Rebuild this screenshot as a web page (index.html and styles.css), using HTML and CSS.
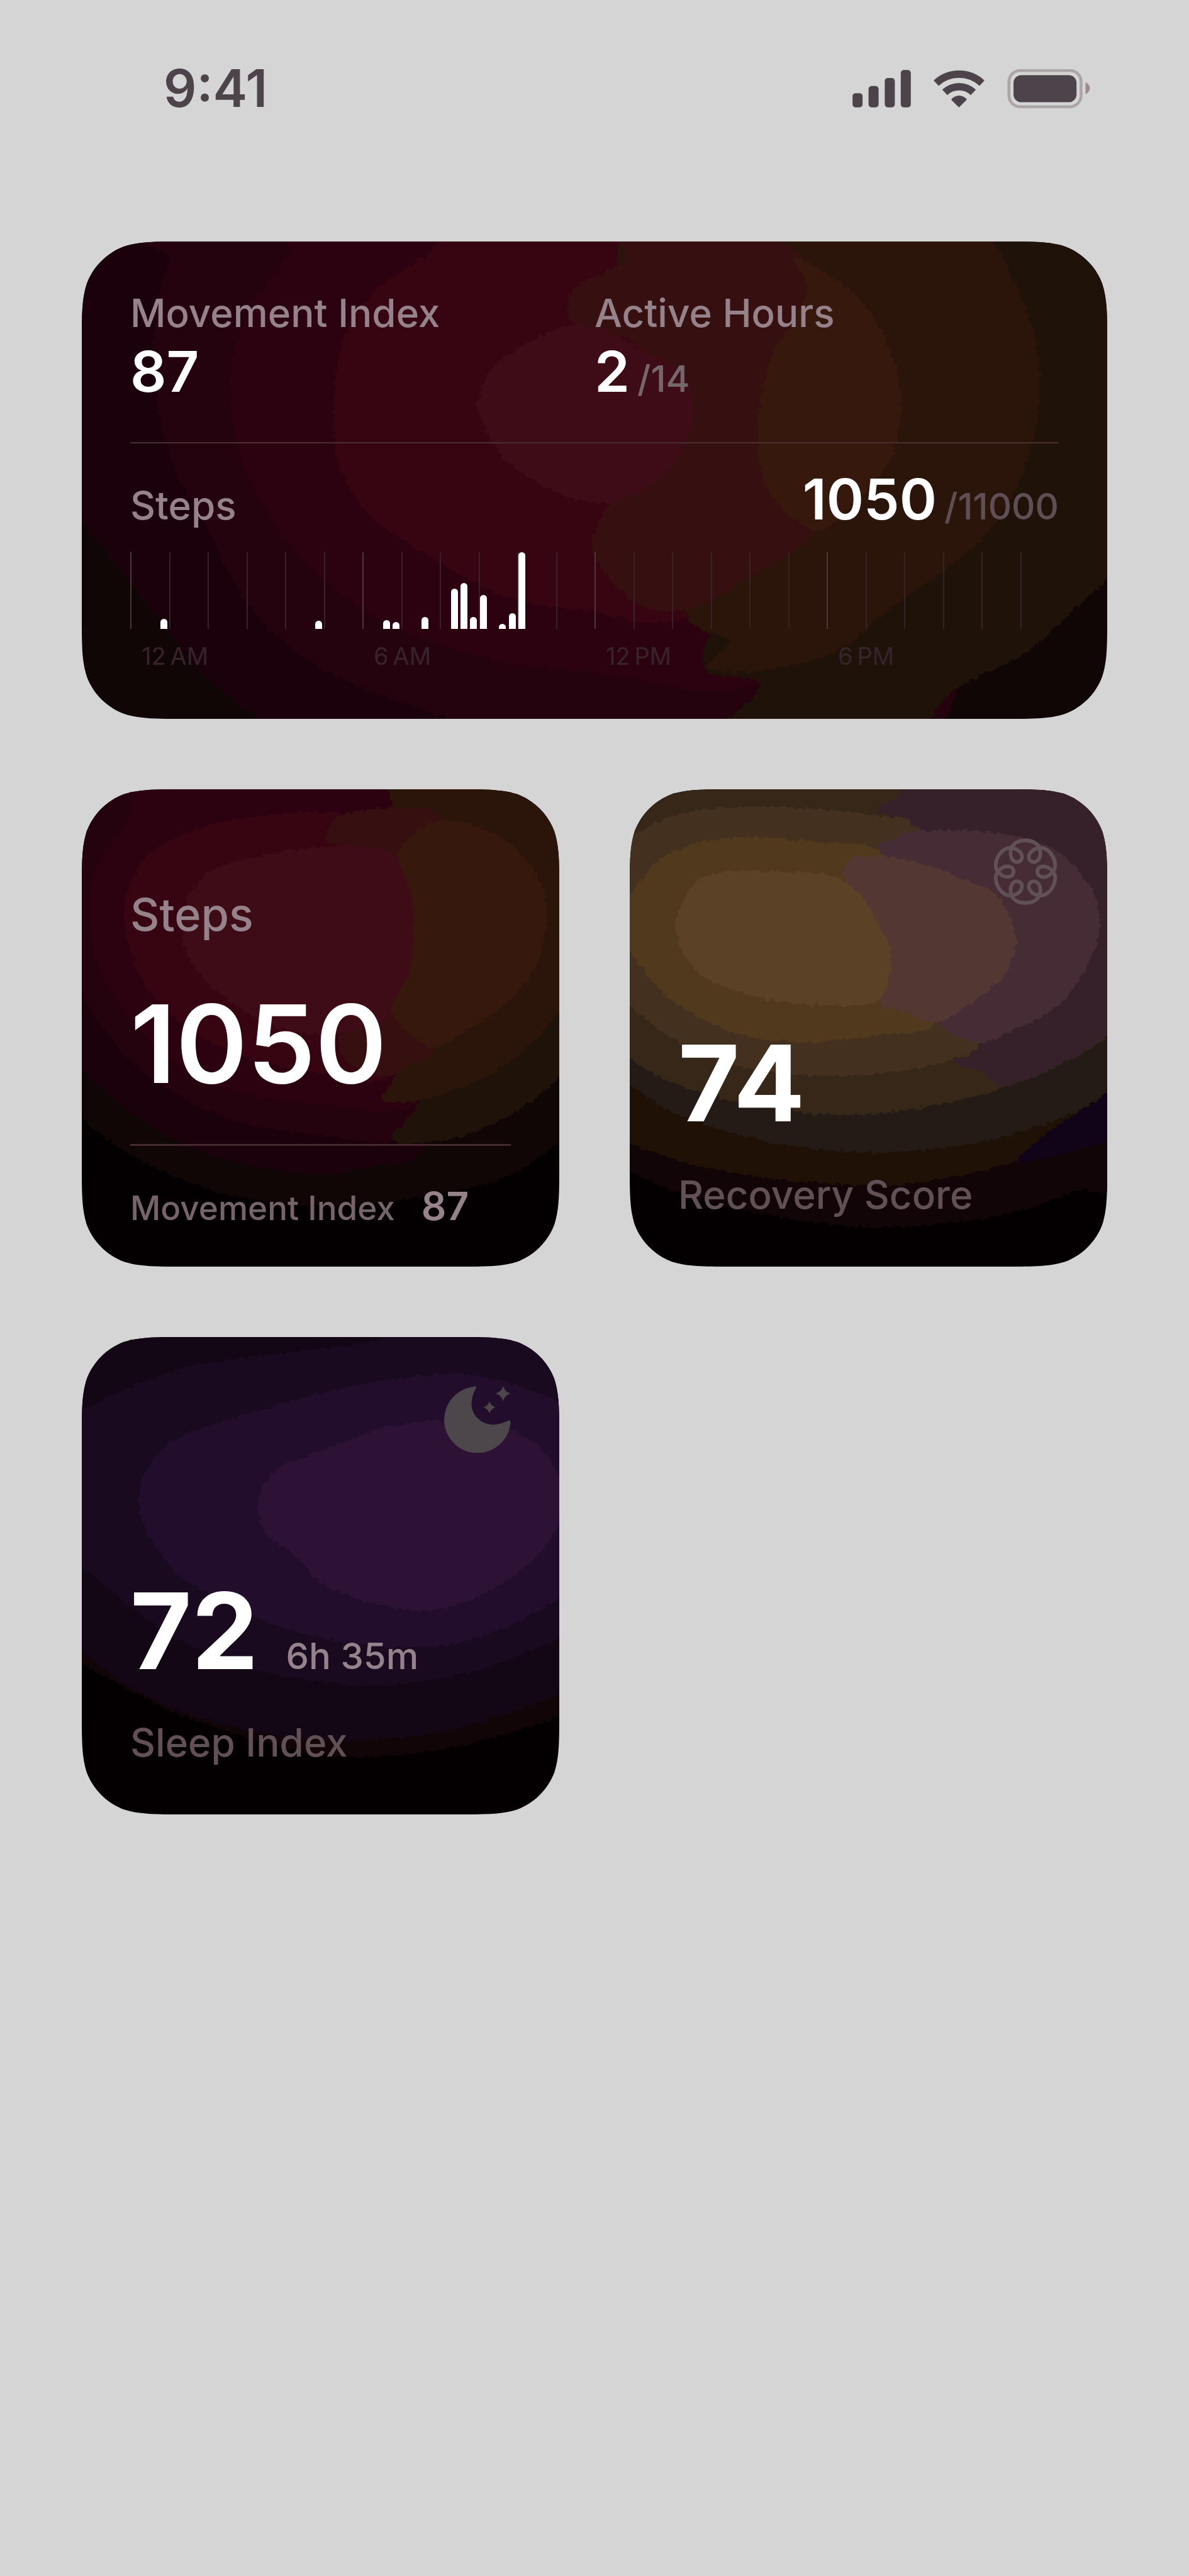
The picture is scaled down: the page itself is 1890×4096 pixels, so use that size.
FILE: index.html
```html
<!DOCTYPE html>
<html lang="en">
<head>
  <meta charset="UTF-8">
  <meta name="viewport" content="width=device-width, initial-scale=1.0">
  <title>Widgets</title>
  <link rel="stylesheet" href="styles.css">
</head>
<body>

<header class="status-bar">
  <time class="clock">9:41</time>
  <div class="status-icons">
    <svg class="icon-signal" viewBox="83 62 284 190" aria-label="Signal">
      <rect x="83" y="179" width="49" height="69" rx="15"/>
      <rect x="161" y="144" width="49" height="104" rx="15"/>
      <rect x="240" y="105" width="49" height="143" rx="15"/>
      <rect x="318" y="66" width="49" height="182" rx="15"/>
    </svg>
    <svg class="icon-wifi" viewBox="475 62 247 190" aria-label="Wi-Fi">
      <path class="arc" d="M487,130 A164,164 0 0 1 710,130"/>
      <path class="arc" d="M529,175 A101,101 0 0 1 668,175"/>
      <path d="M598,248 L562,213 Q560,208 564,205 Q598,177 633,205 Q637,208 634,213 Z"/>
    </svg>
    <svg class="icon-battery" viewBox="831 62 401 190" aria-label="Battery">
      <rect class="shell" x="838" y="69" width="351" height="176" rx="54"/>
      <rect x="860" y="91" width="307" height="132" rx="38"/>
      <path class="nub" d="M1211,125 Q1232,138 1232,155 Q1232,172 1211,185 Z"/>
    </svg>
  </div>
</header>

<main class="widgets">

  <!-- wide movement widget -->
  <section class="card card-wide">
    <svg class="backdrop" data-bands="movement" viewBox="0 0 1630 759" preserveAspectRatio="none" aria-hidden="true">
      <defs>
        <clipPath id="shapeWide">
          <path d="M162,0 H1468 C1515,0 1538,0 1563,8 C1590,18 1612,40 1622,67 C1630,92 1630,115 1630,162 V597 C1630,644 1630,667 1622,692 C1612,719 1590,741 1563,751 C1538,759 1515,759 1468,759 H162 C115,759 92,759 67,751 C40,741 18,719 8,692 C0,667 0,644 0,597 V162 C0,115 0,92 8,67 C18,40 40,18 67,8 C92,0 115,0 162,0 Z"/>
        </clipPath>
        <filter id="roughWide" x="0" y="0" width="100%" height="100%" color-interpolation-filters="sRGB">
          <feTurbulence type="fractalNoise" baseFrequency="0.12" numOctaves="3" seed="4"/>
          <feDisplacementMap in="SourceGraphic" scale="13" xChannelSelector="R" yChannelSelector="G"/>
        </filter>
      </defs>
      <g clip-path="url(#shapeWide)">
        <rect width="1630" height="759" fill="#110606"/>
        <g filter="url(#roughWide)"><g class="bands" transform="scale(1.0395 0.484)"></g></g>
      </g>
    </svg>

    <div class="card-body">
      <div class="metrics">
        <div class="metric">
          <h2 class="label">Movement Index</h2>
          <p class="value">87</p>
        </div>
        <div class="metric">
          <h2 class="label">Active Hours</h2>
          <p class="value">2<span class="goal">/14</span></p>
        </div>
      </div>
      <hr class="rule">
      <div class="steps-row">
        <h2 class="label">Steps</h2>
        <p class="value">1050<span class="goal goal-dim">/11000</span></p>
      </div>
      <div class="chart">
        <div class="hours" id="hours"></div>
        <div class="bars" id="bars"></div>
      </div>
      <div class="hour-labels">
        <span>12&#8201;AM</span>
        <span>6&#8201;AM</span>
        <span>12&#8201;PM</span>
        <span>6&#8201;PM</span>
      </div>
    </div>
  </section>

  <!-- steps -->
  <section class="card">
    <svg class="backdrop" data-bands="steps" viewBox="0 0 1474 1474" preserveAspectRatio="none" aria-hidden="true">
      <defs>
        <clipPath id="shapeSquare">
          <path d="M315,0 H1159 C1250,0 1295,0 1344,15 C1397,35 1439,77 1459,130 C1474,179 1474,224 1474,315 V1159 C1474,1250 1474,1295 1459,1344 C1439,1397 1397,1439 1344,1459 C1295,1474 1250,1474 1159,1474 H315 C224,1474 179,1474 130,1459 C77,1439 35,1397 15,1344 C0,1295 0,1250 0,1159 V315 C0,224 0,179 15,130 C35,77 77,35 130,15 C179,0 224,0 315,0 Z"/>
        </clipPath>
        <filter id="roughSquare" x="0" y="0" width="100%" height="100%" color-interpolation-filters="sRGB">
          <feTurbulence type="fractalNoise" baseFrequency="0.06" numOctaves="3" seed="9"/>
          <feDisplacementMap in="SourceGraphic" scale="22" xChannelSelector="R" yChannelSelector="G"/>
        </filter>
      </defs>
      <g clip-path="url(#shapeSquare)">
        <rect width="1474" height="1474" fill="#040002"/>
        <g filter="url(#roughSquare)"><g class="bands" transform="translate(-42 -48)"></g></g>
      </g>
    </svg>

    <div class="card-body card-body-steps">
      <h2 class="label label-large">Steps</h2>
      <p class="score score-steps">1050</p>
      <hr class="rule rule-thick">
      <div class="footer-row">
        <span class="footer-label">Movement Index</span>
        <span class="footer-value">87</span>
      </div>
    </div>
  </section>

  <!-- recovery -->
  <section class="card">
    <svg class="backdrop" data-bands="recovery" viewBox="0 0 1474 1474" preserveAspectRatio="none" aria-hidden="true">
      <g clip-path="url(#shapeSquare)">
        <rect width="1474" height="1474" fill="#040002"/>
        <g filter="url(#roughSquare)"><g class="bands" transform="translate(-32 -48)"></g></g>
      </g>
    </svg>

    <div class="card-body card-body-score">
      <svg class="card-icon icon-flower" viewBox="-162 -162 324 324" aria-hidden="true">
        <defs><path id="petal" d="M-67,-116 C-49,-164 49,-164 67,-116 C84,-69 55,-35 29,-50 C3,-65 18,-108 67,-116"/></defs>
        <use href="#petal"/>
        <use href="#petal" transform="rotate(60)"/>
        <use href="#petal" transform="rotate(120)"/>
        <use href="#petal" transform="rotate(180)"/>
        <use href="#petal" transform="rotate(240)"/>
        <use href="#petal" transform="rotate(300)"/>
      </svg>
      <p class="score">74</p>
      <h2 class="label label-dim">Recovery Score</h2>
    </div>
  </section>

  <!-- sleep -->
  <section class="card">
    <svg class="backdrop" data-bands="sleep" viewBox="0 0 1474 1474" preserveAspectRatio="none" aria-hidden="true">
      <g clip-path="url(#shapeSquare)">
        <rect width="1474" height="1474" fill="#040002"/>
        <g filter="url(#roughSquare)"><g class="bands" transform="translate(-42 -36)"></g></g>
      </g>
    </svg>

    <div class="card-body card-body-score">
      <svg class="card-icon icon-moon" viewBox="55 52 322 323" aria-hidden="true">
        <path d="M198,55 Q214,49 208,62 C178,120 180,170 215,205 C255,250 318,244 366,219 Q378,215 376,230 A161,161 0 1 1 198,55 Z"/>
        <path d="M340,52 Q348,80 376,88 Q348,96 340,124 Q332,96 304,88 Q332,80 340,52 Z"/>
        <path d="M274,126 Q281,148 303,155 Q281,162 274,184 Q267,162 245,155 Q267,148 274,126 Z"/>
      </svg>
      <p class="score">72<span class="duration">6h 35m</span></p>
      <h2 class="label label-dim">Sleep Index</h2>
    </div>
  </section>

</main>

<script src="widgets.js"></script>
</body>
</html>
```
FILE: styles.css
```css
* {
  box-sizing: border-box;
}

body {
  margin: 0;
  min-height: 100vh;
  background: #d5d5d5;
  color: #fff;
  font-family: Inter, "Liberation Sans", sans-serif;
}

h2, p {
  margin: 0;
}

/* status bar */
.status-bar {
  display: flex;
  align-items: center;
  justify-content: space-between;
  padding: 93px 157px 0 260px;
  color: #4d434b;
}

.clock {
  font-size: 82px;
  line-height: 96px;
  font-weight: 600;
}

.status-icons {
  display: flex;
  gap: 36px;
}

.status-icons svg {
  display: block;
  height: 62px;
  fill: currentColor;
}

.icon-signal {
  width: 93px;
}

.icon-wifi {
  width: 81px;
}

.icon-battery {
  width: 132px;
}

.icon-wifi .arc {
  fill: none;
  stroke: currentColor;
  stroke-width: 36;
}

.icon-battery .shell {
  fill: none;
  stroke: #aca4a7;
  stroke-width: 14;
}

.icon-battery .nub {
  fill: #9b8b91;
}

/* widget grid */
.widgets {
  display: grid;
  grid-template-columns: 1fr 1fr;
  gap: 112px;
  padding: 195px 130px 130px;
}

.card {
  position: relative;
  min-width: 0;
  aspect-ratio: 1;
}

.card-wide {
  grid-column: span 2;
  aspect-ratio: auto;
}

.backdrop {
  position: absolute;
  inset: 0;
  width: 100%;
  height: 100%;
}

.card-body {
  position: relative;
  padding: 78px 77px;
}

.card-body-steps {
  padding-bottom: 48px;
}

.label {
  font-size: 62px;
  line-height: 72px;
  font-weight: 500;
  color: #95828a;
}

.label-large {
  font-size: 72px;
  line-height: 84px;
  padding-top: 79px;
}

.label-dim {
  color: #615055;
}

.value {
  font-size: 90px;
  line-height: 104px;
  font-weight: 600;
}

.goal {
  margin-left: 12px;
  font-size: 58px;
  line-height: 58px;
  font-weight: 500;
  color: #75676a;
}

.goal-dim {
  color: #5f4f54;
}

.rule {
  height: 2px;
  margin: 60px 0 37px;
  border: 0;
  background: #4b2f30;
}

.rule-thick {
  height: 3px;
  margin: 60px 0;
  background: #472a30;
}

.metrics {
  display: grid;
  grid-template-columns: 1fr 1fr;
}

.metric {
  display: flex;
  flex-direction: column;
  gap: 5px;
}

.steps-row {
  display: flex;
  align-items: baseline;
  justify-content: space-between;
}

/* steps chart: 24 hour lines, four quarter-hour slots each */
.chart {
  display: grid;
  height: 122px;
  margin-top: 32px;
}

.hours,
.bars {
  grid-area: 1 / 1;
  display: grid;
}

.hours {
  grid-template-columns: repeat(24, 1fr);
}

.hours span {
  border-left: 2px solid #38222a;
}

.hours span:nth-child(6n + 1) {
  border-color: #4c383c;
}

.bars {
  grid-template-columns: repeat(96, 1fr);
  align-items: end;
  justify-items: center;
}

.bars span {
  grid-row: 1;
  width: 11px;
  border-radius: 6px 6px 0 0;
  background: #fff;
}

.hour-labels {
  display: grid;
  grid-template-columns: repeat(4, 1fr);
  margin-top: 21px;
  font-size: 38px;
  line-height: 44px;
  color: #38232b;
}

.hour-labels span {
  padding-left: 18px;
}

/* small widgets */
.score {
  font-size: 168px;
  line-height: 200px;
  font-weight: 700;
}

.score-steps {
  margin-top: 63px;
  font-size: 172px;
  font-weight: 600;
}

.footer-row {
  display: flex;
  align-items: baseline;
  gap: 42px;
}

.footer-label {
  font-size: 53px;
  line-height: 72px;
  font-weight: 500;
  color: #75656a;
}

.footer-value {
  font-size: 62px;
  line-height: 72px;
  font-weight: 600;
  color: #95828a;
}

.card-body-score {
  display: flex;
  flex-direction: column;
  height: 100%;
}

.card-body-score .score {
  margin-top: auto;
  margin-bottom: 42px;
}

.card-icon {
  align-self: flex-end;
  width: 106px;
  height: 106px;
}

.icon-flower {
  fill: none;
  stroke: #615055;
  stroke-width: 18;
}

.icon-moon {
  fill: #4d464b;
}

.duration {
  margin-left: 44px;
  font-size: 58px;
  line-height: 58px;
  font-weight: 500;
  color: #95828a;
}
```
FILE: widgets.js
```javascript
// glow bands, drawn back to front: [colour, outline points]
const BANDS = {
  movement: [
    ['#1b010b', [[-60,-60],[900,-60],[1300,800],[1100,1640],[290,1640],[270,1568],[190,1430],[100,1190],[0,920],[-60,800]]],
    ['#24030f', [[150,-60],[135,60],[115,200],[110,400],[118,560],[140,740],[190,930],[235,1130],[300,1300],[400,1440],[560,1568],[640,1640],[1300,1640],[1300,-60]]],
    ['#2c0210', [[360,-60],[320,40],[270,180],[235,340],[228,520],[245,720],[295,930],[370,1110],[470,1260],[620,1370],[800,1420],[1040,1440],[1200,800],[1100,-60]]],
    ['#370412', [[590,-60],[530,40],[450,160],[400,320],[385,540],[395,740],[440,900],[520,1020],[640,1160],[760,1210],[940,1220],[1100,700],[1000,-60]]],
    ['#1f1209', [[1200,-60],[1640,-60],[1640,1000],[1568,1110],[1450,1340],[1330,1480],[1250,1640],[980,1640],[1030,1490],[1030,1440],[950,1400],[1000,1200],[1300,900]]],
    ['#2b150a', [[840,-60],[1360,-60],[1395,0],[1440,200],[1464,400],[1458,620],[1420,850],[1360,1010],[1240,1200],[1150,1350],[1040,1410],[955,1400],[990,1310],[920,1210],[900,700]]],
    ['#361010', [[820,-60],[1010,-60],[1090,30],[1200,300],[1200,700],[1120,960],[1040,1080],[940,1200],[870,1210],[820,1140],[780,1010],[800,880],[860,700],[850,350],[755,280],[750,160],[830,60]]],
    ['#37180d', [[1090,50],[1170,150],[1225,300],[1252,500],[1240,700],[1190,840],[1125,950],[1050,820],[1035,600],[1050,400],[1090,250],[1110,150]]],
    ['#3e0c16', [[740,280],[800,290],[850,350],[915,420],[935,540],[920,680],[870,800],[800,860],[720,820],[645,710],[605,540],[640,390]]]
  ],
  steps: [
    ['#110606', [[-20,-20],[1580,-20],[1580,1080],[1515,1140],[1340,1250],[1080,1310],[780,1335],[500,1300],[300,1230],[150,1150],[42,1065],[-20,1010]]],
    ['#1b010b', [[-20,-20],[1100,-20],[1200,700],[1100,1150],[950,1210],[780,1238],[520,1200],[330,1130],[170,1030],[42,910],[-20,840]]],
    ['#24030f', [[-20,-20],[1100,-20],[1200,700],[1050,1110],[800,1118],[560,1085],[390,1020],[230,920],[110,790],[42,680],[-20,560]]],
    ['#2c0210', [[300,-20],[1100,-20],[1200,700],[1070,1020],[800,1022],[530,985],[350,910],[200,770],[100,610],[65,470],[80,300],[180,150]]],
    ['#370412', [[840,120],[600,130],[430,160],[270,230],[190,340],[172,450],[210,600],[290,720],[420,820],[600,890],[780,925],[1000,930],[1150,600],[1100,200]]],
    ['#1f1209', [[1300,500],[1580,500],[1580,880],[1515,940],[1390,1040],[1200,1125],[1000,1132],[1080,1020],[1150,800]]],
    ['#2b150a', [[980,-20],[1580,-20],[1580,640],[1515,740],[1400,860],[1260,950],[1080,1010],[965,1005],[1010,930],[1100,700],[1000,90]]],
    ['#361010', [[840,130],[1000,105],[1160,140],[1200,400],[1130,840],[1060,890],[980,935],[860,890],[840,780],[1000,600],[960,260],[800,210]]],
    ['#3e0c16', [[900,222],[700,235],[540,265],[420,315],[360,410],[360,540],[430,645],[540,730],[680,795],[850,800],[1000,740],[1070,560],[1080,380],[1040,270]]],
    ['#37180d', [[1150,145],[1250,160],[1370,220],[1455,330],[1478,450],[1440,600],[1350,710],[1220,800],[1120,845],[1000,740],[1055,600],[1062,400],[1020,260],[1060,190]]]
  ],
  recovery: [
    ['#120507', [[-20,-20],[1580,-20],[1580,1180],[1400,1290],[1150,1370],[780,1402],[450,1360],[200,1300],[32,1230],[-20,1200]]],
    ['#1f1106', [[-20,-20],[1580,-20],[1580,1080],[1505,1110],[1250,1190],[1050,1240],[800,1272],[450,1248],[200,1200],[32,1140],[-20,1110]]],
    ['#120418', [[1580,900],[1505,990],[1360,1080],[1230,1195],[1400,1165],[1580,1090]]],
    ['#251b16', [[-20,-20],[1580,-20],[1580,940],[1505,990],[1350,1070],[1100,1140],[800,1170],[500,1145],[250,1080],[120,1020],[32,960],[-20,930]]],
    ['#372718', [[-20,-20],[1580,-20],[1580,740],[1505,810],[1400,880],[1200,965],[1020,1015],[800,1050],[600,1050],[350,1010],[150,950],[32,880],[-20,840]]],
    ['#36212a', [[920,-20],[1580,-20],[1580,740],[1505,805],[1380,890],[1190,965],[1120,920],[1030,890],[1110,830],[1200,500],[900,170],[800,115],[870,60]]],
    ['#160624', [[1290,-20],[1330,48],[1400,70],[1460,110],[1510,190],[1580,200],[1580,-20]]],
    ['#44301f', [[-20,240],[40,190],[180,125],[350,105],[550,105],[800,130],[920,170],[1100,500],[1115,820],[1030,880],[850,922],[600,932],[350,900],[160,815],[32,720],[-20,670]]],
    ['#452c35', [[800,245],[850,200],[900,178],[1080,176],[1250,198],[1380,260],[1470,380],[1480,500],[1430,620],[1350,720],[1220,790],[1110,830],[980,760],[900,500]]],
    ['#51391e', [[-10,430],[35,370],[120,270],[240,215],[400,195],[600,210],[810,245],[950,500],[980,765],[800,808],[600,830],[400,812],[220,740],[110,650],[35,550],[-10,490]]],
    ['#523733', [[690,310],[740,255],[900,268],[1050,320],[1170,380],[1225,510],[1190,620],[1100,700],[980,768],[880,735],[800,700],[780,500]]],
    ['#5b4125', [[176,460],[220,350],[310,305],[480,300],[650,315],[740,370],[800,460],[838,560],[800,700],[620,715],[450,695],[280,640],[200,560]]]
  ],
  sleep: [
    ['#110508', [[-20,-20],[1580,-20],[1580,1170],[1515,1210],[1200,1300],[900,1335],[650,1300],[350,1205],[180,1120],[42,1045],[-20,1000]]],
    ['#130615', [[-20,-20],[1580,-20],[1580,1090],[1515,1140],[1200,1245],[900,1282],[620,1265],[340,1190],[180,1110],[42,1010],[-20,960]]],
    ['#190a20', [[-20,290],[42,262],[200,185],[400,120],[750,75],[950,45],[1100,-20],[1580,-20],[1580,900],[1515,965],[1250,1070],[930,1112],[600,1070],[350,975],[180,860],[42,740],[-20,680]]],
    ['#220d2d', [[240,450],[340,345],[600,260],[900,182],[1200,150],[1400,190],[1515,235],[1580,260],[1580,780],[1515,840],[1360,930],[1150,990],[900,985],[650,930],[480,850],[340,770],[250,650],[218,540]]],
    ['#2d1236', [[590,520],[650,440],[800,380],[960,320],[1130,295],[1330,310],[1450,370],[1520,480],[1520,600],[1440,720],[1300,820],[1130,880],[950,860],[790,800],[700,710],[600,630]]]
  ]
};

// slot (quarter hour) -> bar height in px
const STEPS = [
  [3, 16], [19, 13], [26, 14], [27, 11], [30, 19], [33, 64],
  [34, 73], [35, 19], [36, 54], [38, 8], [39, 25], [40, 122]
];

// closed smooth curve through all points
function smoothPath(pts) {
  const n = pts.length;
  let d = 'M' + pts[0];
  for (let i = 0; i < n; i++) {
    const p0 = pts[(i + n - 1) % n], p1 = pts[i];
    const p2 = pts[(i + 1) % n], p3 = pts[(i + 2) % n];
    const c1 = [p1[0] + (p2[0] - p0[0]) / 7, p1[1] + (p2[1] - p0[1]) / 7];
    const c2 = [p2[0] - (p3[0] - p1[0]) / 7, p2[1] - (p3[1] - p1[1]) / 7];
    d += 'C' + c1 + ' ' + c2 + ' ' + p2;
  }
  return d + 'Z';
}

document.querySelectorAll('.backdrop').forEach(svg => {
  const group = svg.querySelector('.bands');
  BANDS[svg.dataset.bands].forEach(([fill, pts]) => {
    const path = document.createElementNS('http://www.w3.org/2000/svg', 'path');
    path.setAttribute('d', smoothPath(pts));
    path.setAttribute('fill', fill);
    group.appendChild(path);
  });
});

const hours = document.getElementById('hours');
for (let i = 0; i < 24; i++) {
  hours.appendChild(document.createElement('span'));
}

const bars = document.getElementById('bars');
STEPS.forEach(([slot, height]) => {
  const bar = document.createElement('span');
  bar.style.gridColumn = slot + 1;
  bar.style.height = height + 'px';
  bars.appendChild(bar);
});
```
